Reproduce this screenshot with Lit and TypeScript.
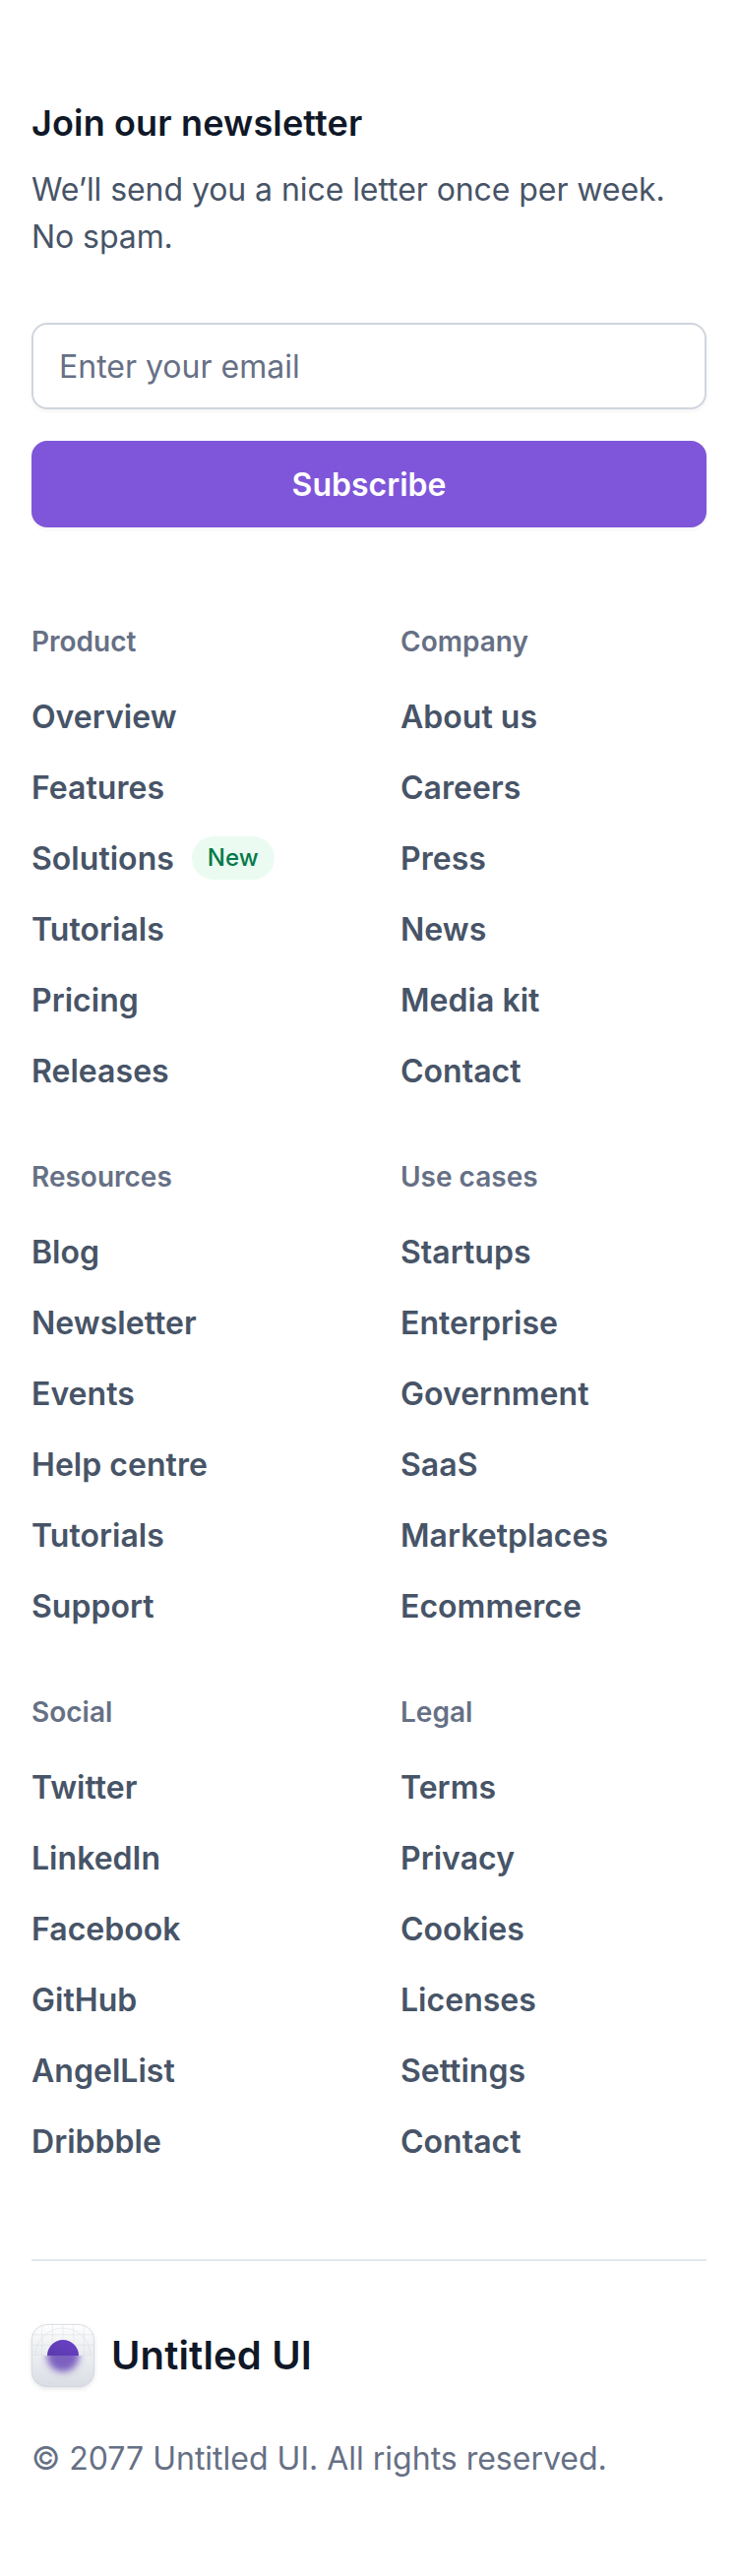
import { LitElement, html, css, svg } from "lit";
import { customElement, property } from "lit/decorators.js";

interface FooterLink {
  label: string;
  badge?: string;
}

interface LinkGroup {
  title: string;
  links: FooterLink[];
}

const group = (title: string, ...labels: string[]): LinkGroup => ({
  title,
  links: labels.map((label) => ({ label })),
});

const GROUPS: LinkGroup[] = [
  {
    title: "Product",
    links: [
      { label: "Overview" },
      { label: "Features" },
      { label: "Solutions", badge: "New" },
      { label: "Tutorials" },
      { label: "Pricing" },
      { label: "Releases" },
    ],
  },
  group("Company", "About us", "Careers", "Press", "News", "Media kit", "Contact"),
  group("Resources", "Blog", "Newsletter", "Events", "Help centre", "Tutorials", "Support"),
  group("Use cases", "Startups", "Enterprise", "Government", "SaaS", "Marketplaces", "Ecommerce"),
  group("Social", "Twitter", "LinkedIn", "Facebook", "GitHub", "AngelList", "Dribbble"),
  group("Legal", "Terms", "Privacy", "Cookies", "Licenses", "Settings", "Contact"),
];

@customElement("link-group")
export class LinkGroupElement extends LitElement {
  @property({ attribute: false }) data!: LinkGroup;

  static styles = css`
    :host {
      display: flex;
      flex-direction: column;
      gap: 32px;
    }
    .title {
      margin: 0;
      font-size: 28px;
      line-height: 40px;
      font-weight: 600;
      color: #667085;
    }
    .list {
      display: flex;
      flex-direction: column;
      gap: 24px;
      margin: 0;
      padding: 0;
      list-style: none;
    }
    .item {
      display: flex;
      align-items: center;
      gap: 18px;
      height: 48px;
    }
    .link {
      padding-top: 2px;
      font-size: 32px;
      line-height: 48px;
      font-weight: 600;
      letter-spacing: 0.03px;
      color: #475467;
      text-decoration: none;
      white-space: nowrap;
    }
    .badge {
      padding: 4px 16px;
      border-radius: 22px;
      background: #ebfbf2;
      color: #027a48;
      font-size: 24px;
      line-height: 36px;
      font-weight: 500;
    }
  `;

  render() {
    return html`
      <h3 class="title">${this.data.title}</h3>
      <ul class="list">
        ${this.data.links.map(
          (l) => html`<li class="item">
            <a class="link" href="#">${l.label}</a>
            ${l.badge ? html`<span class="badge">${l.badge}</span>` : null}
          </li>`,
        )}
      </ul>
    `;
  }
}

@customElement("brand-mark")
export class BrandMark extends LitElement {
  static styles = css`
    :host {
      display: block;
      width: 64px;
      height: 64px;
    }
    .mark {
      display: block;
      overflow: visible;
      filter: drop-shadow(0 2px 2px rgba(16, 24, 40, 0.1));
    }
  `;

  render() {
    const steps = [10.7, 21.3, 32, 42.7, 53.3];
    return html`
      <svg class="mark" width="64" height="64" viewBox="0 0 64 64">
        <defs>
          <linearGradient id="plate" x1="0" y1="0" x2="0" y2="1">
            <stop offset="0" stop-color="#ffffff" />
            <stop offset="1" stop-color="#d0d5dd" />
          </linearGradient>
          <linearGradient id="ball" x1="24" y1="48" x2="40" y2="16" gradientUnits="userSpaceOnUse">
            <stop offset="0" stop-color="#53389e" />
            <stop offset="1" stop-color="#6941c6" />
          </linearGradient>
          <clipPath id="round"><rect width="64" height="64" rx="16" /></clipPath>
          <clipPath id="upper"><rect width="64" height="32" /></clipPath>
          <clipPath id="lower"><rect y="32" width="64" height="32" /></clipPath>
          <filter id="soft" x="-50%" y="-50%" width="200%" height="200%">
            <feGaussianBlur stdDeviation="3.5" />
          </filter>
        </defs>
        <g clip-path="url(#round)">
          <rect width="64" height="64" fill="url(#plate)" />
          <g clip-path="url(#upper)" fill="none" stroke="#d0d5dd" stroke-opacity="0.35">
            ${steps.map((p) => svg`<path d="M${p} 0V64M0 ${p}H64" />`)}
            <circle cx="32" cy="32" r="28" />
          </g>
          <path d="M16 32a16 16 0 0 1 32 0z" fill="url(#ball)" />
          <rect y="32" width="64" height="32" fill="#ffffff" fill-opacity="0.2" />
          <g clip-path="url(#lower)">
            <circle cx="32" cy="32" r="16.5" fill="#623db5" fill-opacity="0.8" filter="url(#soft)" />
          </g>
        </g>
        <rect x="0.4" y="0.4" width="63.2" height="63.2" rx="15.6" fill="none" stroke="#d0d5dd" stroke-width="0.8" />
      </svg>
    `;
  }
}

@customElement("app-root")
export class AppRoot extends LitElement {
  static styles = css`
    :host {
      display: block;
      background: #fff;
      font-family: Inter, "Liberation Sans", sans-serif;
    }
    .footer {
      display: flex;
      flex-direction: column;
      gap: 96px;
      padding: 96px 32px;
    }
    .newsletter {
      display: flex;
      flex-direction: column;
      gap: 64px;
    }
    .intro {
      box-sizing: border-box;
      display: flex;
      flex-direction: column;
      gap: 16px;
      height: 168px;
      padding-top: 1px;
    }
    .heading {
      margin: 0;
      font-size: 36px;
      line-height: 56px;
      font-weight: 600;
      letter-spacing: 0.15px;
      color: #101828;
    }
    .text {
      margin: 0;
      font-size: 32px;
      line-height: 48px;
      letter-spacing: -0.07px;
      color: #475467;
    }
    .form {
      display: flex;
      flex-direction: column;
      gap: 32px;
    }
    .field,
    .button {
      box-sizing: border-box;
      width: 100%;
      height: 88px;
      margin: 0;
      border-radius: 16px;
      font-family: inherit;
      font-size: 32px;
      line-height: 48px;
      box-shadow: 0 2px 4px rgba(16, 24, 40, 0.05);
    }
    .field {
      padding: 18px 26px;
      border: 2px solid #d0d5dd;
      background: #fff;
      color: #101828;
    }
    .field::placeholder {
      color: #667085;
      opacity: 1;
    }
    .button {
      padding: 2px 0 0;
      border: 0;
      background: #7f56d9;
      color: #fff;
      font-weight: 600;
    }
    .groups {
      display: grid;
      grid-template-columns: 1fr 1fr;
      gap: 64px;
    }
    .bottom {
      display: flex;
      flex-direction: column;
      gap: 48px;
      padding-top: 64px;
      border-top: 2px solid #e4e7ec;
    }
    .brand {
      display: flex;
      align-items: center;
      gap: 17px;
    }
    .name {
      font-size: 40px;
      line-height: 64px;
      font-weight: 600;
      letter-spacing: 0.15px;
      color: #101828;
    }
    .legal {
      box-sizing: border-box;
      height: 48px;
      margin: 0;
      padding-top: 1px;
      font-size: 32px;
      line-height: 48px;
      color: #667085;
    }
  `;

  render() {
    return html`
      <footer class="footer">
        <section class="newsletter">
          <div class="intro">
            <h2 class="heading">Join our newsletter</h2>
            <p class="text">We’ll send you a nice letter once per week. No spam.</p>
          </div>
          <form class="form" @submit=${(e: Event) => e.preventDefault()}>
            <input class="field" type="email" placeholder="Enter your email" />
            <button class="button" type="submit">Subscribe</button>
          </form>
        </section>
        <nav class="groups">${GROUPS.map((g) => html`<link-group .data=${g}></link-group>`)}</nav>
        <div class="bottom">
          <div class="brand">
            <brand-mark></brand-mark>
            <span class="name">Untitled UI</span>
          </div>
          <p class="legal">© 2077 Untitled UI. All rights reserved.</p>
        </div>
      </footer>
    `;
  }
}
